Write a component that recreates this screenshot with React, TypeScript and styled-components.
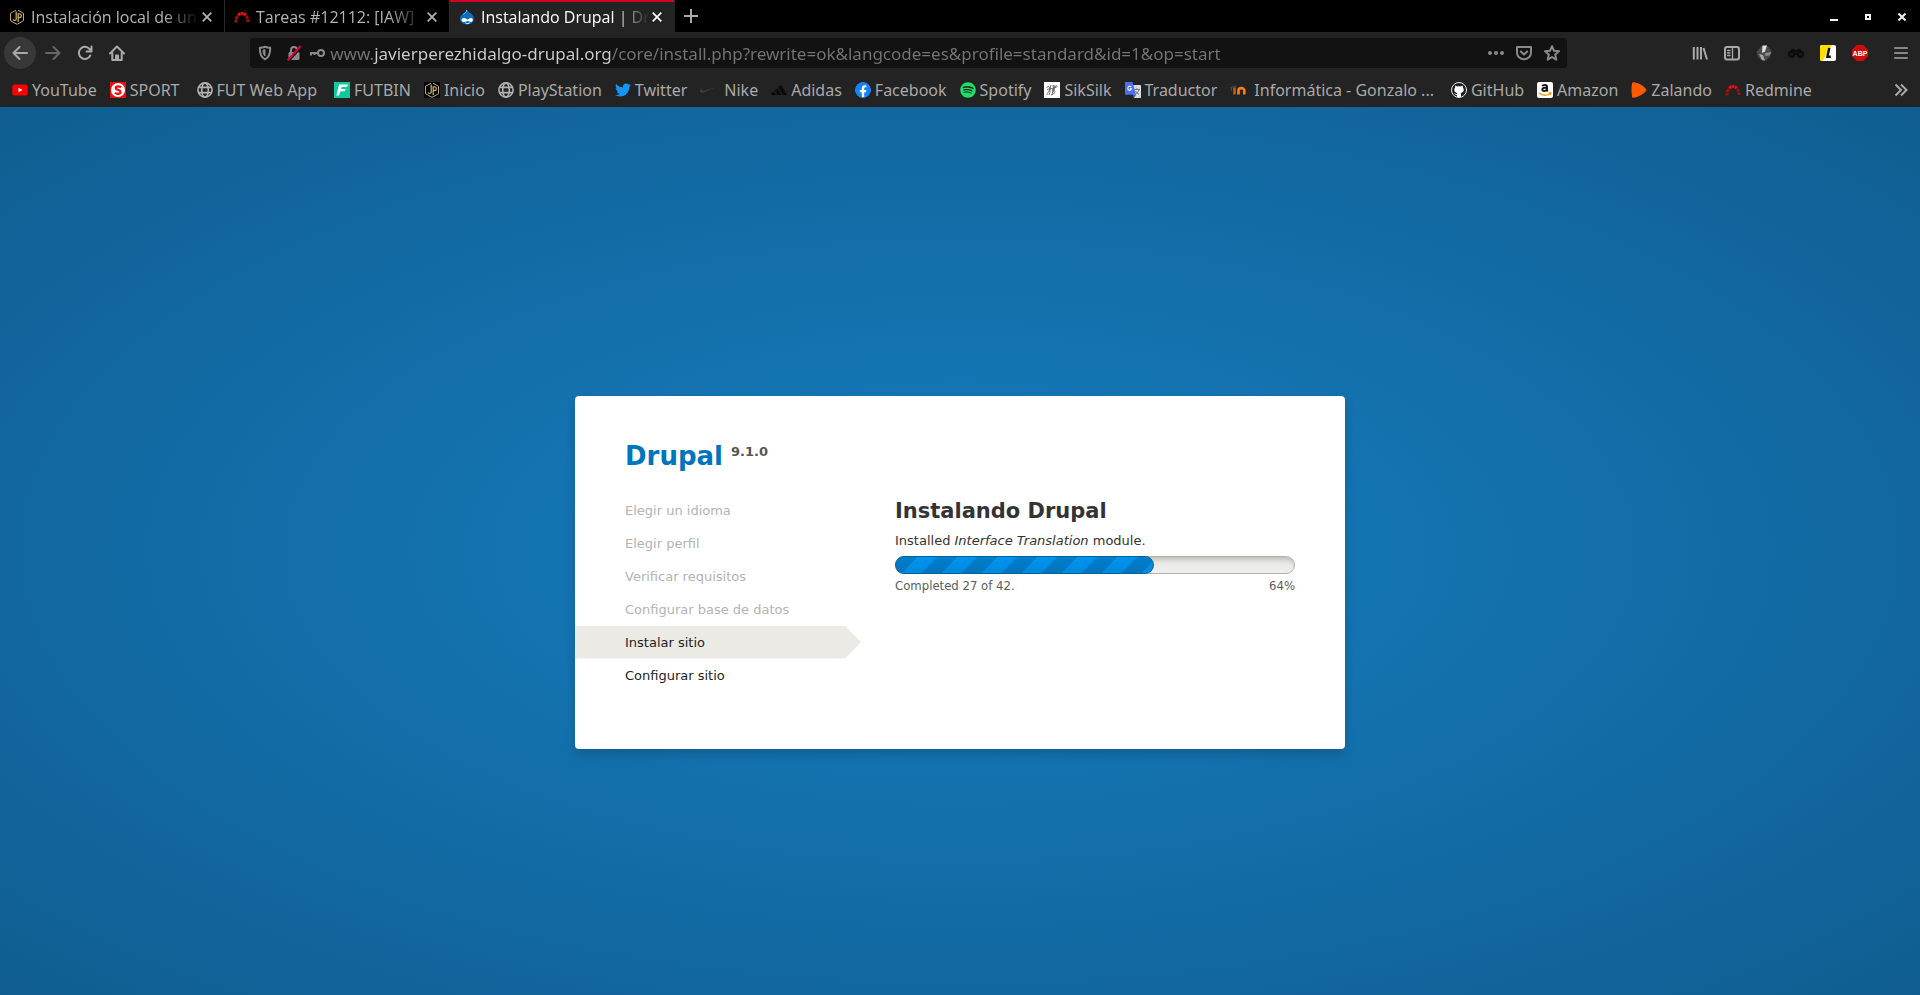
import React from "react";
import styled, { createGlobalStyle } from "styled-components";
import { FaTwitter, FaFacebook, FaSpotify } from "react-icons/fa";
import { SiNike, SiAdidas } from "react-icons/si";

const GlobalStyle = createGlobalStyle`
  * { box-sizing: border-box; }
  body { margin: 0; }
  button { border: 0; padding: 0; background: none; color: inherit; font: inherit; cursor: pointer; }
`;

const Window = styled.div`
  display: flex;
  flex-direction: column;
  min-height: 100vh;
`;

/* ---------- browser chrome ---------- */

const Chrome = styled.header`
  background: #232323;
  color: #a9a9a9;
  font: 16px/24px "Noto Sans", "Open Sans", sans-serif;
`;

const TabStrip = styled.div`
  display: flex;
  align-items: stretch;
  height: 32px;
  background: #000;
`;

const Tab = styled.div<{ $active?: boolean }>`
  display: flex;
  align-items: center;
  width: 225px;
  padding: 2px 9px 0;
  color: ${(p) => (p.$active ? "#fff" : "#b4b4b4")};
  background: ${(p) => (p.$active ? "#232323" : "#000")};
  border-right: 1px solid ${(p) => (p.$active ? "#232323" : "#2b2b2b")};
  box-shadow: ${(p) => (p.$active ? "inset 0 2px #d70022" : "none")};
  font-family: "Open Sans", "Noto Sans", sans-serif;
`;

const TabTitle = styled.span`
  flex: 1;
  padding-left: 6px;
  overflow: hidden;
  white-space: nowrap;
  mask-image: linear-gradient(to left, transparent 0, #000 36px);
`;

const TabClose = styled.button`
  display: grid;
  place-items: center;
  width: 16px;
  height: 16px;
`;

const NewTab = styled.button`
  display: grid;
  place-items: center;
  width: 32px;
`;

const WindowButtons = styled.div`
  display: flex;
  margin-left: auto;
  padding-right: 1px;
  color: #f2f2f2;
`;

const WindowButton = styled.button`
  display: grid;
  place-items: center;
  width: 34px;
  padding-top: 2px;
`;

const NavBar = styled.div`
  display: flex;
  align-items: center;
  height: 42px;
  padding: 0 3px 0 4px;
`;

const NavButton = styled.button<{ $dim?: boolean }>`
  display: grid;
  place-items: center;
  flex: none;
  width: 32px;
  height: 32px;
  opacity: ${(p) => (p.$dim ? 0.5 : 1)};
`;

const BackButton = styled(NavButton)`
  margin-right: 1px;
  border-radius: 50%;
  background: #383838;
`;

const Spacer = styled.div`
  flex: 0 0 6vw;
`;

const UrlBar = styled.div`
  display: flex;
  align-items: center;
  flex: 1;
  height: 30px;
  margin: 0 2px;
  padding: 0 1px;
  border-radius: 4px;
  background: #121212;
  color: #8a8a8a;
`;

const UrlIcon = styled.button<{ $w: number }>`
  display: grid;
  place-items: center;
  flex: none;
  width: ${(p) => p.$w}px;
  height: 28px;
`;

/* The host name is lit, the rest of the address is dimmed. */
const UrlInput = styled.input`
  flex: 1;
  min-width: 0;
  margin: 0 0 0 5px;
  padding: 2px 0 0;
  border: 0;
  outline: 0;
  font: 17px/26px "Noto Sans", "Open Sans", sans-serif;
  color: transparent;
  background: linear-gradient(to right, #747474 43px, #cfcfcf 43px 281px, #747474 281px);
  background-clip: text;
`;

const MenuButton = styled(NavButton)`
  margin-left: 9px;
`;

const Bookmarks = styled.nav`
  display: flex;
  align-items: center;
  gap: 13px;
  height: 33px;
  padding: 0 12px 2px;
`;

const Bookmark = styled.a<{ $wide?: boolean; $roomy?: boolean }>`
  display: flex;
  align-items: center;
  gap: ${(p) => (p.$wide ? 8 : 4)}px;
  margin-right: ${(p) => (p.$roomy ? 4 : 0)}px;
  color: inherit;
  text-decoration: none;
  white-space: nowrap;

  svg { flex: none; }
`;

const MoreBookmarks = styled.button`
  display: grid;
  place-items: center;
  margin-left: auto;
`;

/* ---------- installer page ---------- */

const Page = styled.main`
  flex: 1;
  display: grid;
  place-items: center;
  padding: 42px 16px 0;
  background: radial-gradient(#167dc0, #105e91);
  color: #333;
  font: 13px/20px "DejaVu Sans", sans-serif;
`;

const Card = styled.div`
  width: 100%;
  max-width: 770px;
  padding: 40px 50px 57px;
  border-radius: 4px;
  background: #fff;
  box-shadow: 0 6px 12px rgba(0, 0, 0, 0.16);
`;

const SiteName = styled.h1`
  display: flex;
  align-items: flex-start;
  gap: 8px;
  margin: 0 0 18px;
  color: #0074bd;
  font-size: 26px;
  line-height: 40px;
`;

const Version = styled.span`
  color: #555;
  font-size: 13px;
  line-height: 31px;
`;

const Columns = styled.div`
  display: grid;
  grid-template-columns: 270px 1fr;
`;

const TaskList = styled.ol`
  list-style: none;
  margin: 0;
  padding: 0;
`;

const Task = styled.li<{ $state: "done" | "active" | "todo" }>`
  line-height: 33px;
  color: ${(p) => (p.$state === "done" ? "#b3b3b3" : "#1e1e1e")};
  ${(p) =>
    p.$state === "active" &&
    `
    margin: 0 34px 0 -50px;
    padding-left: 50px;
    background: #ebeae4;
    clip-path: polygon(0 0, calc(100% - 16px) 0, 100% 50%, calc(100% - 16px) 100%, 0 100%);
  `}
`;

const Title = styled.h2`
  margin: 0 0 2px;
  font-size: 21px;
  line-height: 35px;
`;

const Track = styled.div`
  height: 18px;
  margin: 5px 0 2px;
  border: 1px solid #b3b3b0;
  border-radius: 10px;
  background: linear-gradient(#e4e4dd, #f0f0f0);
  box-shadow: inset 0 5px 5px -3px rgba(0, 0, 0, 0.2);
`;

const Bar = styled.div`
  height: 18px;
  margin: -1px;
  border: 1px solid #07629a;
  border-radius: 10px;
  background:
    linear-gradient(rgba(0, 0, 0, 0), rgba(0, 0, 0, 0.08)),
    linear-gradient(135deg, #007ecc 25%, #0094f0 25% 50%, #007ecc 50% 75%, #0094f0 75%) 2px 0 / 40px 40px;
`;

const Status = styled.div`
  display: flex;
  justify-content: space-between;
  color: #5c5c5c;
  font-family: "DejaVu Sans Condensed", "DejaVu Sans", sans-serif;
`;

/* ---------- icons ---------- */

const Cross = ({ s = 10, w = 2 }: { s?: number; w?: number }) => (
  <svg width={s} height={s} viewBox="0 0 10 10" stroke="currentColor" strokeWidth={w}>
    <path d="M.7.7l8.6 8.6M9.3.7L.7 9.3" />
  </svg>
);

const HexLogo = ({ boxed }: { boxed?: boolean }) => (
  <svg width="16" height="16" viewBox="0 0 16 16" fill="none" stroke="#c4aa68">
    {boxed && <path d="M0 0h16v16H0z" fill="#000" stroke="none" />}
    <path d="M7 1.200L1.500 4.300v7.400L8 15.300l6.500-3.600V4.300L9 1.200" />
    <path d="M7.200 2.500v7.800c0 1.500-2.700 1.500-3 0M9.200 13V4.800h1.600c2 0 2 3.700 0 3.700H9.200" strokeWidth="1.300" />
  </svg>
);

const RedmineLogo = () => (
  <svg width="16" height="16" viewBox="0 0 16 16" fill="none" strokeWidth="3">
    <path d="M2 13.500C2 8 4.200 4.500 8 4.500s6 3.500 6 9" stroke="#a80d0d" strokeDasharray="2.600 .9" />
    <path d="M4.500 5.900C5.500 5 6.700 4.500 8 4.500s2.500.5 3.500 1.400" stroke="#e31212" strokeDasharray="2.100 .7" />
  </svg>
);

const DrupalLogo = () => (
  <svg width="16" height="16" viewBox="0 0 16 16">
    <path d="M8 .8c.6 1.600 2 2.300 3.600 3.500C13.600 5.800 15 7.500 15 9.800c0 3.300-3 5.700-7 5.700s-7-2.400-7-5.700C1 7.500 2.400 5.800 4.400 4.300 6 3.100 7.600 2.400 8 .8z" fill="#0b6fc0" />
    <path d="M7.800 1c0 2-2 3.200-3.400 4.400" stroke="#7cc0ee" fill="none" />
    <path d="M5 9c1.700 0 2.600 1.500 3.600 1.500S10.500 9 11.800 9c1.300 0 2 .9 2 2s-.7 1.900-1.900 1.900c-1.300 0-2.200-1-3.200-1s-2 1.200-3.500 1.200-2.700-.8-2.700-2.100S3.700 9 5 9z" fill="#fff" />
    <path d="M6.500 14c1.500.8 3 .7 4.200-.1" stroke="#fff" fill="none" />
  </svg>
);

const Globe = () => (
  <svg width="16" height="16" viewBox="0 0 16 16" fill="none" stroke="#b1b1b1" strokeWidth="1.600">
    <circle cx="8" cy="8" r="7.100" />
    <ellipse cx="8" cy="8" rx="3.300" ry="7.100" />
    <path d="M1.500 5.400h13M1.500 10.600h13" />
  </svg>
);

const YouTubeLogo = () => (
  <svg width="16" height="16" viewBox="0 0 16 16">
    <rect x=".3" y="2.500" width="15.400" height="11" rx="2.600" fill="#f00" />
    <path d="M6.500 5.700v4.600l4-2.300z" fill="#fff" />
  </svg>
);

const SportLogo = () => (
  <svg width="16" height="16" viewBox="0 0 16 16">
    <path d="M0 0h16v16H0z" fill="#f20c0c" />
    <circle cx="8" cy="8" r="7" fill="#fff" />
    <path d="M11 5.300C9.500 4 5.700 3.700 5.700 6c0 2.200 4.800 1.600 4.800 4 0 2.300-4 2.300-5.500.700" fill="none" stroke="#f20c0c" strokeWidth="2.200" />
  </svg>
);

const FutbinLogo = () => (
  <svg width="16" height="16" viewBox="0 0 16 16">
    <path d="M0 0h16v16H0z" fill="#0fc9a0" />
    <path d="M5 2.500h9L13 5H7.600l-.5 2h4.600l-.9 2.300H6.400L5 13.500H2.400z" fill="#fff" />
  </svg>
);

const SikSilkLogo = () => (
  <svg width="16" height="16" viewBox="0 0 16 16" fill="none" stroke="#555" strokeWidth=".8">
    <path d="M0 0h16v16H0z" fill="#fff" stroke="none" />
    <path d="M2.500 6C4 3 7 5 5.500 8S2.500 12 3 13M7 3C5 8 7 9 5 13M8 4c4-1 3 3 0 4 4-1 4 4-1 5M10 3L8 13M12.500 3c-2 2-2 5-4 8M3 7.500C7 6 10 7 13.500 4.500" />
  </svg>
);

const TranslateLogo = () => (
  <svg width="16" height="16" viewBox="0 0 16 16">
    <path d="M6 3h9.200c.5 0 .8.300.8.800v11.400c0 .5-.3.800-.8.800H9z" fill="#dcdcdc" />
    <path d="M9 7.500h6M12 6v1.500M14 7.500c-.6 2.500-2 4-4 5M10.500 9c.8 1.500 2 2.700 3.700 3.500" stroke="#70808a" fill="none" />
    <path d="M.8 0h6.700L11 12.800H.8c-.5 0-.8-.3-.8-.8V.8C0 .3.300 0 .8 0z" fill="#4c6ef0" />
    <path d="M8 12.800h3L9 16z" fill="#3450b8" />
    <path d="M6.400 4.800c-1.300-1.200-3.600-.5-3.600 1.600s2.900 2.900 3.700.3H4.700" stroke="#fff" strokeWidth="1.100" fill="none" />
  </svg>
);

const MoodleLogo = () => (
  <svg width="16" height="16" viewBox="0 0 16 16" fill="none" strokeWidth="2.600">
    <path d="M.3 5.800L6.500 3.800M1.500 6v3" stroke="#55473c" strokeWidth="1.200" />
    <path d="M4.500 12.500V5.500" stroke="#c25a10" />
    <path d="M8.500 12.500V8.500c0-3.200 5.800-3.200 5.800 0v4" stroke="#f98012" />
  </svg>
);

const AmazonLogo = () => (
  <svg width="16" height="16" viewBox="0 0 16 16">
    <rect width="16" height="16" rx="2" fill="#fff" />
    <path d="M5.300 4.300C5.800 2.500 10 2.200 10 4.700V8c0 .8.500 1 .8 1.400M10 5.500C7 5.500 5.300 6 5.300 7.700c0 2 3.700 2 4.700-.5" stroke="#111" strokeWidth="1.900" fill="none" />
    <path d="M2 10.800c3.500 3.300 8.500 3 11 .8M11.500 11h2.200l-.5 2" stroke="#f90" strokeWidth="1.300" fill="none" />
  </svg>
);

const ZalandoLogo = () => (
  <svg width="16" height="16" viewBox="0 0 16 16">
    <path d="M2.300.3C7 .6 12 3.500 14.800 6.700c.7.800.7 1.800 0 2.600C12 12.500 7 15.400 2.300 15.700c-.6 0-1-.2-1.200-.8C.3 11 .3 5 1.100 1.100 1.300.5 1.700.3 2.300.3z" fill="#ff5a00" />
  </svg>
);

const GitHubLogo = () => (
  <svg width="16" height="16" viewBox="0 0 16 16">
    <circle cx="8" cy="8" r="8" fill="#1b1f23" />
    <circle cx="8" cy="8" r="7.500" fill="none" stroke="#e8e8e8" />
    <path d="M4.300 3.500l2 .9c1-.3 2.400-.3 3.400 0l2-.9.300 2.200c1.600 2.300.5 4.900-2.400 5.200.5.600.5 1.200.5 4H5.900c0-.7.100-1.300 0-2-1.600.3-2-.9-2.700-1.600 1.400-.1 1.400 1.200 2.800.7.100-.5.200-.8.400-1.100C3.500 10.600 2.400 8 4 5.700z" fill="#fff" />
  </svg>
);

const FacebookLogo = () => (
  <svg width="16" height="16" viewBox="0 0 16 16">
    <circle cx="8" cy="8" r="7.500" fill="#fff" />
    <FaFacebook size={16} color="#1083fb" />
  </svg>
);

const Glyph = ({ children, w = 2 }: { children: React.ReactNode; w?: number }) => (
  <svg width="16" height="16" viewBox="0 0 16 16" fill="none" stroke="currentColor" strokeWidth={w} strokeLinecap="round" strokeLinejoin="round">
    {children}
  </svg>
);

const LensIcon = () => (
  <svg width="16" height="16" viewBox="0 0 16 16">
    <path d="M5.500 1L11 .5 15.500 6l-1.500 6-4 3.500H6L2 12 .5 7z" fill="#4a4a4a" />
    <path d="M6.500.5h4.500L9 6.500 6 8z" fill="#e0e0e0" />
    <path d="M9 8l6.500-1-2 3.500-4 .5z" fill="#8c8c8c" />
    <path d="M3 9l4 1 2 5.500-3-.5z" fill="#a8a8a8" />
  </svg>
);

const BinocularsIcon = () => (
  <svg width="16" height="16" viewBox="0 0 16 16" fill="none" stroke="#0b0b0b" strokeWidth="1.800">
    <circle cx="3.600" cy="9.300" r="2.700" fill="#1a1a1a" />
    <circle cx="12.400" cy="9.300" r="2.700" fill="#1a1a1a" />
    <path d="M2.500 6.500L5 4.800l3 1.700 3-1.700 2.500 1.700M6.300 9h3.400" />
  </svg>
);

const LIcon = () => (
  <svg width="16" height="16" viewBox="0 0 16 16">
    <rect width="16" height="16" rx="2" fill="#fff" />
    <path d="M2 0h10L2.500 16H2a2 2 0 0 1-2-2V2a2 2 0 0 1 2-2z" fill="#ffdf00" />
    <path d="M9.300 3L7.400 11.800h3.400" stroke="#111" strokeWidth="2.400" fill="none" />
  </svg>
);

const AbpText = styled.text`
  font: bold 7px "Liberation Sans", sans-serif;
`;

const AbpIcon = () => (
  <svg width="16" height="16" viewBox="0 0 16 16">
    <path d="M4.700 0h6.600L16 4.700v6.600L11.300 16H4.700L0 11.300V4.700z" fill="#d10a0a" />
    <AbpText x="8" y="10.500" textAnchor="middle" fill="#fff">ABP</AbpText>
  </svg>
);

/* ---------- data ---------- */

const tabs = [
  { title: "Instalación local de un", icon: <HexLogo /> },
  { title: "Tareas #12112: [IAW]", icon: <RedmineLogo /> },
  { title: "Instalando Drupal | Dr", icon: <DrupalLogo />, active: true },
];

const bookmarks: { name: string; icon: React.ReactNode; wide?: boolean; roomy?: boolean }[] = [
  { name: "YouTube", icon: <YouTubeLogo /> },
  { name: "SPORT", icon: <SportLogo />, roomy: true },
  { name: "FUT Web App", icon: <Globe />, roomy: true },
  { name: "FUTBIN", icon: <FutbinLogo /> },
  { name: "Inicio", icon: <HexLogo boxed /> },
  { name: "PlayStation", icon: <Globe /> },
  { name: "Twitter", icon: <FaTwitter size={16} color="#1297f5" /> },
  { name: "Nike", icon: <SiNike size={16} color="#3a3a3a" />, wide: true },
  { name: "Adidas", icon: <SiAdidas size={16} color="#0a0a0a" /> },
  { name: "Facebook", icon: <FacebookLogo /> },
  { name: "Spotify", icon: <FaSpotify size={16} color="#1ee066" /> },
  { name: "SikSilk", icon: <SikSilkLogo /> },
  { name: "Traductor", icon: <TranslateLogo /> },
  { name: "Informática - Gonzalo ...", icon: <MoodleLogo />, wide: true, roomy: true },
  { name: "GitHub", icon: <GitHubLogo /> },
  { name: "Amazon", icon: <AmazonLogo /> },
  { name: "Zalando", icon: <ZalandoLogo /> },
  { name: "Redmine", icon: <RedmineLogo /> },
];

const tasks: { name: string; state: "done" | "active" | "todo" }[] = [
  { name: "Elegir un idioma", state: "done" },
  { name: "Elegir perfil", state: "done" },
  { name: "Verificar requisitos", state: "done" },
  { name: "Configurar base de datos", state: "done" },
  { name: "Instalar sitio", state: "active" },
  { name: "Configurar sitio", state: "todo" },
];

const percent = 64;

export default function App() {
  return (
    <Window>
      <GlobalStyle />
      <Chrome>
        <TabStrip>
          {tabs.map((t) => (
            <Tab key={t.title} $active={t.active}>
              {t.icon}
              <TabTitle>{t.title}</TabTitle>
              <TabClose aria-label="Cerrar pestaña"><Cross w={1.7} /></TabClose>
            </Tab>
          ))}
          <NewTab aria-label="Nueva pestaña">
            <svg width="14" height="14" viewBox="0 0 14 14" stroke="currentColor" strokeWidth="2"><path d="M7 0v14M0 7h14" /></svg>
          </NewTab>
          <WindowButtons>
            <WindowButton aria-label="Minimizar">
              <svg width="8" height="8" viewBox="0 0 8 8" fill="currentColor"><path d="M0 6h8v2H0z" /></svg>
            </WindowButton>
            <WindowButton aria-label="Maximizar">
              <svg width="6" height="6" viewBox="0 0 6 6" fill="none" stroke="currentColor" strokeWidth="2"><path d="M1 1h4v4H1z" /></svg>
            </WindowButton>
            <WindowButton aria-label="Cerrar"><Cross s={8} w={2.5} /></WindowButton>
          </WindowButtons>
        </TabStrip>

        <NavBar>
          <BackButton aria-label="Atrás"><Glyph><path d="M15 8H1.500M7.500 2l-6 6 6 6" /></Glyph></BackButton>
          <NavButton $dim aria-label="Adelante"><Glyph><path d="M1 8h13.500M8.500 2l6 6-6 6" /></Glyph></NavButton>
          <NavButton aria-label="Recargar"><Glyph><path d="M13.300 10.500A6 6 0 1 1 12.500 4L14 5.500M14.500 1.500v5h-5" /></Glyph></NavButton>
          <NavButton aria-label="Inicio"><Glyph><path d="M1 8.500L8 1.500l7 7M3.300 8v7h9.400V8M7 15v-4.500h2V15" /></Glyph></NavButton>
          <Spacer />
          <UrlBar>
            <UrlIcon $w={28} aria-label="Protección">
              <Glyph><path d="M8 1.800c2 .8 3.500 1 5.200 1C13.300 8 12 12.500 8 14.300 4 12.500 2.700 8 2.800 2.800 4.500 2.800 6 2.600 8 1.800z" /><path d="M8 5v6C6.500 9.800 6 7.500 6 5.500z" fill="currentColor" strokeWidth="1" /></Glyph>
            </UrlIcon>
            <UrlIcon $w={30} aria-label="Conexión no segura">
              <svg width="16" height="16" viewBox="0 0 16 16" fill="none">
                <rect x="2.500" y="7" width="11" height="8" rx="1.500" fill="#8a8a8a" />
                <path d="M5 7.500V5a3 3 0 0 1 6 0v2.500" stroke="#8a8a8a" strokeWidth="2" />
                <path d="M2.500 16L15 2" stroke="#121212" strokeWidth="2.500" />
                <path d="M1.500 15.300L14.500 1" stroke="#e6003c" strokeWidth="1.900" />
              </svg>
            </UrlIcon>
            <UrlIcon $w={16} aria-label="Contraseñas">
              <Glyph><circle cx="12" cy="8" r="3" /><path d="M9 8H1M2 8v2.500M5.500 8v2" strokeLinecap="butt" /></Glyph>
            </UrlIcon>
            <UrlInput aria-label="Dirección" defaultValue="www.javierperezhidalgo-drupal.org/core/install.php?rewrite=ok&langcode=es&profile=standard&id=1&op=start" />
            <UrlIcon $w={28} aria-label="Acciones de página">
              <svg width="16" height="16" viewBox="0 0 16 16" fill="currentColor"><circle cx="2" cy="8" r="2" /><circle cx="8" cy="8" r="2" /><circle cx="14" cy="8" r="2" /></svg>
            </UrlIcon>
            <UrlIcon $w={28} aria-label="Guardar en Pocket">
              <Glyph><path d="M1 2h14v5.500a7 6.800 0 0 1-14 0zM4.800 6.500L8 9.500l3.200-3" /></Glyph>
            </UrlIcon>
            <UrlIcon $w={28} aria-label="Añadir a marcadores">
              <Glyph><path d="M8 1.200l2 4.600 5 .5-3.800 3.300 1.100 5L8 12l-4.300 2.600 1.100-5L1 6.300l5-.5z" /></Glyph>
            </UrlIcon>
          </UrlBar>
          <Spacer />
          <NavButton aria-label="Biblioteca"><Glyph><path d="M1.800 2v12.500M5.500 2v12.500M9 2v12.500M11.500 3l3.500 11.500" strokeLinecap="butt" /></Glyph></NavButton>
          <NavButton aria-label="Barra lateral"><Glyph><rect x="1" y="2" width="14" height="12.500" rx="2" /><path d="M8.500 2v12M3.500 5.500H6M3.500 8H6M3.500 10.500H6" strokeWidth="1.300" /></Glyph></NavButton>
          <NavButton aria-label="Extensión de imágenes"><LensIcon /></NavButton>
          <NavButton aria-label="Extensión de búsqueda"><BinocularsIcon /></NavButton>
          <NavButton aria-label="Extensión L"><LIcon /></NavButton>
          <NavButton aria-label="Adblock Plus"><AbpIcon /></NavButton>
          <MenuButton aria-label="Abrir menú"><Glyph><path d="M2 3h12M2 8h12M2 13h12" strokeLinecap="square" strokeWidth="1.600" /></Glyph></MenuButton>
        </NavBar>

        <Bookmarks>
          {bookmarks.map((b) => (
            <Bookmark key={b.name} href="#" $wide={b.wide} $roomy={b.roomy}>{b.icon}{b.name}</Bookmark>
          ))}
          <MoreBookmarks aria-label="Más marcadores">
            <svg width="14" height="14" viewBox="0 0 14 14" fill="none" stroke="currentColor" strokeWidth="2"><path d="M1.500 1.500L7 7l-5.500 5.500M7 1.500L12.500 7 7 12.500" /></svg>
          </MoreBookmarks>
        </Bookmarks>
      </Chrome>

      <Page>
        <Card>
          <SiteName>Drupal <Version>9.1.0</Version></SiteName>
          <Columns>
            <TaskList>
              {tasks.map((t) => <Task key={t.name} $state={t.state}>{t.name}</Task>)}
            </TaskList>
            <section>
              <Title>Instalando Drupal</Title>
              <div>Installed <em>Interface Translation</em> module.</div>
              <Track role="progressbar" aria-label="Progreso" aria-valuenow={percent} aria-valuemin={0} aria-valuemax={100}>
                <Bar style={{ width: `calc(${percent}% + 4px)` }} />
              </Track>
              <Status><span>Completed 27 of 42.</span><span>{percent}%</span></Status>
            </section>
          </Columns>
        </Card>
      </Page>
    </Window>
  );
}
